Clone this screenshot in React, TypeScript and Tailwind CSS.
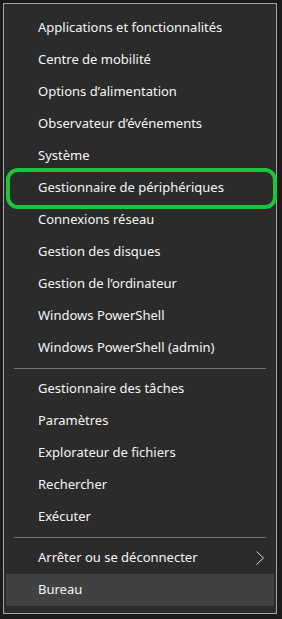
const groups: string[][] = [
  [
    "Applications et fonctionnalités",
    "Centre de mobilité",
    "Options d’alimentation",
    "Observateur d’événements",
    "Système",
    "Gestionnaire de périphériques",
    "Connexions réseau",
    "Gestion des disques",
    "Gestion de l’ordinateur",
    "Windows PowerShell",
    "Windows PowerShell (admin)",
  ],
  [
    "Gestionnaire des tâches",
    "Paramètres",
    "Explorateur de fichiers",
    "Rechercher",
    "Exécuter",
  ],
];

function MenuItem({ label, active, submenu }: { label: string; active?: boolean; submenu?: boolean }) {
  return (
    <div
      className={`mx-[2px] flex h-8 items-center justify-between pl-8 pr-[8px] ${
        active ? "bg-[#414141]" : ""
      }`}
    >
      <span>{label}</span>
      {submenu && (
        <svg width="10" height="14" viewBox="0 0 10 14" className="mr-[1px]">
          <polyline points="1.5,0.5 8.5,7 1.5,13.5" fill="none" stroke="#d6d6d6" strokeWidth="1" />
        </svg>
      )}
    </div>
  );
}

function Separator() {
  return (
    <div className="flex h-[9px] items-center px-[10px]">
      <div className="h-px w-full bg-[#717171]" />
    </div>
  );
}

export default function App() {
  return (
    <div className="relative h-[619px] w-[282px] overflow-hidden bg-[#1b1b1b] pl-[3px] pt-[3px]">
      <div
        className="w-[274px] border border-[#a6a6a6] bg-[#2b2b2b] pb-[7px] pt-2 text-[13px] text-[#f5f5f5]"
        style={{ fontFamily: '"Noto Sans", "Open Sans", sans-serif' }}
      >
        {groups[0].map((label) => (
          <MenuItem key={label} label={label} />
        ))}
        <Separator />
        {groups[1].map((label) => (
          <MenuItem key={label} label={label} />
        ))}
        <Separator />
        <MenuItem label="Arrêter ou se déconnecter" submenu />
        <MenuItem label="Bureau" active />
      </div>
      {/* green annotation ring drawn over the menu */}
      <div className="absolute left-[6px] top-[168px] h-[41px] w-[271px] rounded-[12px] border-[4px] border-[#1ec53c]" />
    </div>
  );
}
